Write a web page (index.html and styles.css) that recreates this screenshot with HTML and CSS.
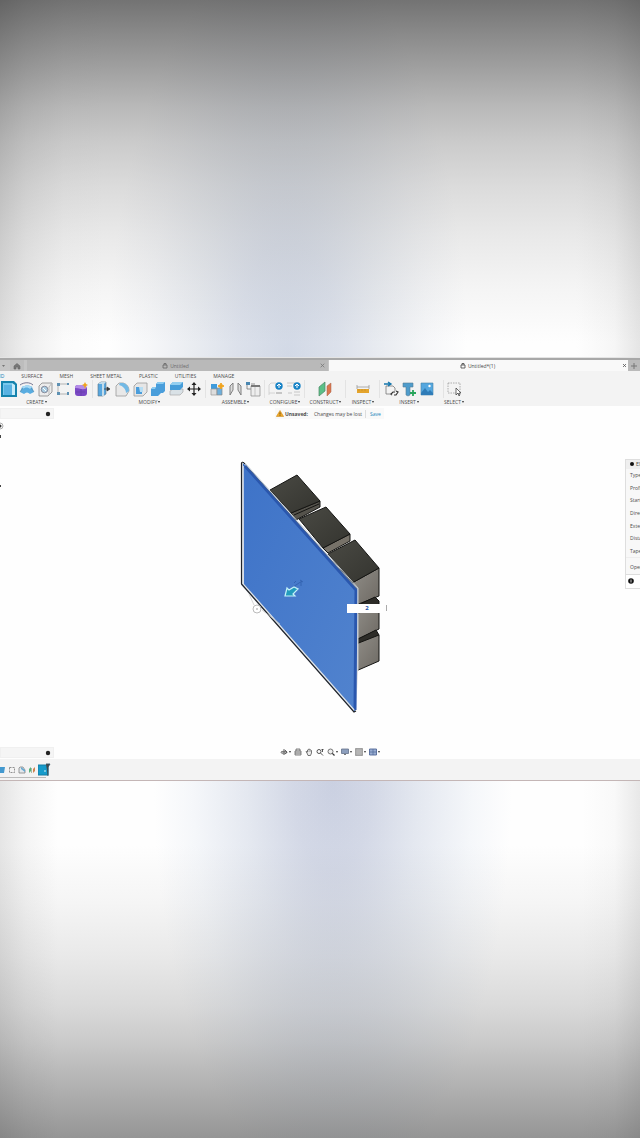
FILE: index.html
```html
<!DOCTYPE html>
<html lang="en">
<head>
<meta charset="utf-8">
<meta name="viewport" content="width=device-width, initial-scale=1">
<title>Untitled*(1)</title>
<link rel="stylesheet" href="styles.css">
</head>
<body>
<div class="backdrop backdrop-top"></div>
<main class="app">
  <nav class="tabs" aria-label="Documents">
    <div class="tab-home">
      <button aria-label="Menu"><svg width="6" height="6" viewBox="0 0 6 6"><path d="M2 2h3L3.500 4z" fill="#777"/></svg></button>
      <button class="home" aria-label="Home"><svg width="8" height="8" viewBox="0 0 8 8"><path d="M1 4L4 1.500 7 4v3H5V5H3v2H1z" fill="#777" stroke="#666" stroke-width=".6"/></svg></button>
    </div>
    <div class="tab">
      <button class="tab-name"><svg width="6" height="7" viewBox="0 0 6 7"><path d="M1 3h4v3H1zM2 3V1.5h2V3" fill="none" stroke="#666" stroke-width=".8"/></svg>Untitled</button>
      <button class="close" aria-label="Close Untitled"><svg width="5" height="5" viewBox="0 0 5 5"><path d="M.7.7l3.6 3.6M4.3.7L.7 4.3" stroke="#777" stroke-width=".8"/></svg></button>
    </div>
    <div class="tab active">
      <button class="tab-name"><svg width="6" height="7" viewBox="0 0 6 7"><path d="M1 3h4v3H1zM2 3V1.5h2V3" fill="none" stroke="#444" stroke-width=".8"/></svg>Untitled*(1)</button>
      <button class="close" aria-label="Close Untitled 1"><svg width="5" height="5" viewBox="0 0 5 5"><path d="M1 1l3 3M4 1L1 4" stroke="#555" stroke-width=".8"/></svg></button>
    </div>
    <button class="tab-new" aria-label="New document"><svg width="8" height="8" viewBox="0 0 8 8"><path d="M4 1v6M1 4h6" stroke="#777" stroke-width="1"/></svg></button>
  </nav>

  <header class="ribbon">
    <nav class="modes" aria-label="Workspaces">
      <button class="current">SOLID</button><button>SURFACE</button><button>MESH</button><button>SHEET METAL</button><button>PLASTIC</button><button>UTILITIES</button><button>MANAGE</button>
    </nav>
    <div class="groups">
      <section class="group create">
        <div class="icons">
          <button class="pressed" aria-label="Extrude"><svg viewBox="0 0 16 16"><path d="M0 0h13l3 3v13H0z" fill="#1583ad"/><path d="M2 2h9l3 2v10H2z" fill="#c7ecfa"/><path d="M2 2h9v12H2z" fill="#78c8ec"/><path d="M3 4h8v10H3z" fill="#59b2e2"/></svg></button>
          <button aria-label="Revolve"><svg viewBox="0 0 16 16"><path d="M3 6c3-2 8-2 10 0l2 5-4 2c-2-2-4-2-6 0L1 11z" fill="#58ace0"/><path d="M3 6c3-2 8-2 10 0l-2 2C9 6 6 6 4 8z" fill="#a7daf5"/><path d="M1 4c4-3 10-3 13 0" stroke="#557" fill="none" stroke-width=".8"/><path d="M1 11l3-4M15 11l-3-4" stroke="#5d8cab" fill="none" stroke-width=".7"/></svg></button>
          <button aria-label="Hole"><svg viewBox="0 0 16 16"><path d="M2 5l3-3h10v9l-4 4H2z" fill="#ececec" stroke="#888" stroke-width=".8"/><path d="M12 14V6l3-4" fill="none" stroke="#bbb"/><circle cx="7.500" cy="8.500" r="3.300" fill="#a9cce1" stroke="#778" stroke-width=".8"/><path d="M6 7l3 3" stroke="#fff"/></svg></button>
          <button aria-label="Sketch"><svg viewBox="0 0 16 16"><path d="M3 3h10M3 3v10h10M13 13v-2" fill="none" stroke="#999" stroke-width=".7"/><path d="M2 2h3v3H2zM12 2h2v2h-2zM2 11h3v3H2zM12 11h2v3h-2z" fill="#5e91b3"/></svg></button>
          <button aria-label="Create form"><svg viewBox="0 0 16 16"><path d="M2 7q0-3 3-3h5q3 0 4 3v5q0 3-3 3H5q-3 0-3-3z" fill="#7a48c4"/><path d="M2 7q0-3 3-3h5q3 0 4 3-3 2-6 1-3-1-6-1z" fill="#b48ce8"/><path d="M8 8v7M3 11h9" stroke="#6a40b0"/><path d="M12 1l1 2 2 1-2 1-1 3-1-3-2-1 2-1z" fill="#f0a31c"/></svg></button>
        </div>
        <button class="label">CREATE<i class="caret"></i></button>
      </section>
      <section class="group">
        <div class="icons">
          <button aria-label="Press pull"><svg viewBox="0 0 16 16"><path d="M2 3l3-2h5v12l-3 2H2z" fill="#58a7df" stroke="#5c7384" stroke-width=".6"/><path d="M2 3l3-2h5L8 3v12H6V3z" fill="#c4dcea"/><path d="M8 8h4M11 6l3 2-3 2z" stroke="#333" fill="#333" stroke-width=".7"/></svg></button>
          <button aria-label="Fillet"><svg viewBox="0 0 16 16"><path d="M2 5l3-3h4c4 1 6 4 6 8l-3 5H2z" fill="#e8e8e8" stroke="#999" stroke-width=".8"/><path d="M6 2h3c4 1 6 4 6 8l-3 2c0-4-3-7-7-8z" fill="#72b9e5"/></svg></button>
          <button aria-label="Shell"><svg viewBox="0 0 16 16"><path d="M2 5l3-3h10v9l-4 4H2z" fill="#e6e6e6" stroke="#999" stroke-width=".8"/><path d="M4 6h6v7H4z" fill="#4a9ddb"/><path d="M7 6h4v5H8z" fill="#b7def4"/></svg></button>
          <button aria-label="Combine"><svg viewBox="0 0 16 16"><path d="M6 3l2-2h7v9l-2 2h-2l-3 3H1V8l2-2h3z" fill="#4a9edb"/><path d="M6 3l2-2h7l-2 2zM1 8l2-2h3l-1 2z" fill="#8cccf1"/></svg></button>
          <button aria-label="Split body"><svg viewBox="0 0 16 16"><path d="M2 10l3-2h10v3l-3 3H2z" fill="#d9e1e6" stroke="#aaa" stroke-width=".7"/><path d="M2 4l3-3h10v5l-3 3H2z" fill="#469dd9"/><path d="M2 4l3-3h10l-3 3z" fill="#94cff0"/></svg></button>
          <button aria-label="Move"><svg viewBox="0 0 16 16"><path d="M8 2v12M2 8h12" stroke="#222" stroke-width="1.200"/><path d="M8 1l2.500 3h-5zM8 15l2.500-3h-5zM1 8l3-2.500v5zM15 8l-3-2.500v5z" fill="#222"/></svg></button>
        </div>
        <button class="label">MODIFY<i class="caret"></i></button>
      </section>
      <section class="group">
        <div class="icons">
          <button aria-label="New component"><svg viewBox="0 0 16 16"><path d="M2 3h6v5H2z" fill="#3f9bdc"/><path d="M2 8h6v6H2z" fill="#ddd" stroke="#999" stroke-width=".7"/><path d="M8 7h5v7H8z" fill="#6dafdc" stroke="#888" stroke-width=".7"/><path d="M12 2l1 2 2 1-2 1-1 2-1-2-2-1 2-1z" fill="#f0a31c" stroke="#f0a31c"/></svg></button>
          <button aria-label="Joint"><svg viewBox="0 0 16 16"><path d="M3 14V5l3-3v7zM14 14V5l-3-3v7z" fill="#ddd" stroke="#777" stroke-width=".9"/></svg></button>
          <button aria-label="Bill of materials"><svg viewBox="0 0 16 16"><path d="M1 1h4v3H1z" fill="#4b87b1"/><path d="M2 4v4h4M6 3h4" fill="none" stroke="#777" stroke-width=".8"/><path d="M6 5h9v10H6z" fill="#eee" stroke="#888" stroke-width=".7"/><path d="M6 4h9v2H6z" fill="#777"/><path d="M10 6v9" stroke="#aaa" stroke-width=".6"/></svg></button>
        </div>
        <button class="label">ASSEMBLE<i class="caret"></i></button>
      </section>
      <section class="group">
        <div class="icons">
          <button aria-label="Configure"><svg viewBox="0 0 16 16"><path d="M1 14V4l2-2h5M1 12h6" fill="none" stroke="#ccc" stroke-width=".8"/><circle cx="11" cy="5" r="3.700" fill="#1682c6"/><path d="M11 3v4M9 5l2-2 2 2" stroke="#fff" fill="none"/><path d="M8 12h6" stroke="#999"/></svg></button>
          <button aria-label="Configuration table"><svg viewBox="0 0 16 16"><path d="M1 2h8M1 5h5" stroke="#bbb" stroke-width=".8"/><circle cx="11" cy="5" r="3.700" fill="#1682c6"/><path d="M11 3v4M9 5l2-2 2 2" stroke="#fff" fill="none"/><path d="M2 12h4M8 11h6M8 14h6" stroke="#bbb" stroke-width=".8"/></svg></button>
        </div>
        <button class="label">CONFIGURE<i class="caret"></i></button>
      </section>
      <section class="group">
        <div class="icons"><button aria-label="Offset plane"><svg viewBox="0 0 16 16"><path d="M2 6l6-5v9l-6 5z" fill="#5cc088" stroke="#4b8766" stroke-width=".7"/><path d="M10 5l4-3v9l-4 4z" fill="#dc7750" stroke="#a56247" stroke-width=".5"/></svg></button></div>
        <button class="label">CONSTRUCT<i class="caret"></i></button>
      </section>
      <section class="group">
        <div class="icons"><button aria-label="Measure"><svg viewBox="0 0 16 16"><path d="M2 6h12M2 4v4M14 4v4" stroke="#999" stroke-width=".8"/><path d="M2 8h12v4H2z" fill="#e4a42c"/><path d="M4 8v2M7 8v2M10 8v2" stroke="#b98523" stroke-width=".5"/></svg></button></div>
        <button class="label">INSPECT<i class="caret"></i></button>
      </section>
      <section class="group insert">
        <div class="icons">
          <button aria-label="Insert derive"><svg viewBox="0 0 16 16"><path d="M3 5h7l2 2v3M3 5v8h5" fill="none" stroke="#777" stroke-width=".8"/><path d="M1 3h6M5 1l3 2-3 2" fill="none" stroke="#1677ad" stroke-width="1.400"/><path d="M9 14l-1-1 2-2h2M11 14h2l2-3-2-1" fill="none" stroke="#333" stroke-width="1.200"/></svg></button>
          <button aria-label="Insert fastener"><svg viewBox="0 0 16 16"><path d="M2 2h10v4H9v8l-2 1-2-1V6H2z" fill="#4e9ccc" stroke="#557d95" stroke-width=".6"/><path d="M12 9v6M9 12h6" stroke="#28a55b" stroke-width="1.800"/></svg></button>
          <button aria-label="Canvas"><svg viewBox="0 0 16 16"><path d="M2 2h12v12H2z" fill="#55a7df" stroke="#4783a8" stroke-width=".6"/><path d="M2 12l4-5 3 4 2-2 3 3v2H2z" fill="#2f7cb8"/><circle cx="10.500" cy="5" r="1.200" fill="#fff"/></svg></button>
        </div>
        <button class="label">INSERT<i class="caret"></i></button>
      </section>
      <section class="group">
        <div class="icons"><button aria-label="Select"><svg viewBox="0 0 16 16"><path d="M2 2h12v10H2z" fill="none" stroke="#999" stroke-width=".8" stroke-dasharray="1.500 1"/><path d="M10 7v7l2-2 1 3 1-1-1-2h2z" fill="#fff" stroke="#444" stroke-width=".8"/></svg></button></div>
        <button class="label">SELECT<i class="caret"></i></button>
      </section>
    </div>
  </header>

  <section class="viewport">
    <svg class="model" viewBox="0 406 640 353" role="img" aria-label="Extruded panel with blocks">
      <defs>
        <linearGradient id="face" x1="0" y1="0" x2="1" y2="1"><stop offset="0" stop-color="#3e73c8"/><stop offset="1" stop-color="#5183ce"/></linearGradient>
        <linearGradient id="top" x1="0" y1="0" x2="1" y2="1"><stop offset="0" stop-color="#4a4a44"/><stop offset="1" stop-color="#34342f"/></linearGradient>
        <linearGradient id="side" x1="0" y1="0" x2="1" y2="1"><stop offset="0" stop-color="#918e88"/><stop offset="1" stop-color="#6d6963"/></linearGradient>
      </defs>
      <g stroke="#151513" stroke-width="1" stroke-linejoin="round">
        <path d="M291 513l29-12v6l-24 13z" fill="#55534c"/>
        <path d="M294 515l25-11" fill="none"/>
        <path d="M270 490l27-15 23 26-29 12z" fill="url(#top)"/>
        <path d="M323 548l27-14v7l-22 12z" fill="#777269"/>
        <path d="M299 519l27-12 24 27-27 14z" fill="url(#top)"/>
        <path d="M352 583l27-15v28l-23 9z" fill="url(#side)"/>
        <path d="M328 554l27-14 24 28-27 15z" fill="url(#top)"/>
        <path d="M356 606l19-9 4 4v4l-23 9z" fill="#2d2c28"/>
        <path d="M356 614l23-9v24l-23 11z" fill="url(#side)"/>
        <path d="M356 640l20-10 3 5-23 10z" fill="#2d2c28"/>
        <path d="M356 644l23-9v26l-23 10z" fill="url(#side)"/>
      </g>
      <path d="M241 463l2-1 115 127v82l-2 41h-2L241 585z" fill="#d7dadf"/>
      <path d="M243 463l113 127-1 122-111-127z" fill="url(#face)"/>
      <path d="M245 466l111 124-1 120" fill="none" stroke="#2a57ae" stroke-width="3"/>
      <path d="M243 462l114 127" fill="none" stroke="#4f6789" stroke-width=".8"/>
      <path d="M244 462l114 126v83" fill="none" stroke="#c5ced6" stroke-width="1"/>
      <path d="M243 466v118l111 126" fill="none" stroke="#dfe4e9" stroke-width="1.500"/>
      <path d="M241.500 463v121L354 712l2-1" fill="none" stroke="#20242b" stroke-width="1.200"/>
      <path d="M241 463l2-1 2 2" fill="none" stroke="#222"/>
      <path d="M293 587l9-6M294 583l2-2M300 580l3 2M301 586v-4" stroke="#2c5aa8" stroke-width=".7"/>
      <path d="M285 596l2-8 2 2 5-3 4 2-5 5 2 2z" fill="#239cbd" stroke="#c5f2f8" stroke-width="1.200"/>
      <path d="M249 594l5 11M262 610l18 14" stroke="#ccc" stroke-width=".8"/>
      <circle cx="257" cy="609" r="4" fill="#fff" stroke="#aaa" stroke-width=".8"/><path d="M256 609h2" stroke="#888" stroke-width=".8"/>
    </svg>

    <aside class="browser" aria-label="Browser"><button aria-label="Browser options"><svg width="6" height="6" viewBox="0 0 6 6"><circle cx="3" cy="3" r="2.200" fill="#222"/></svg></button></aside>
    <div class="tree">
      <svg width="4" height="66" viewBox="0 0 4 66"><circle cx="0" cy="4" r="3" fill="none" stroke="#999" stroke-width=".8"/><circle cx="0" cy="4" r="1.500" fill="#333"/><path d="M0 13h1v3H0zM0 63h1v2H0z" fill="#444"/></svg>
    </div>

    <div class="notice" role="status">
      <svg width="8" height="7" viewBox="0 0 8 7"><path d="M4 .5L7.700 6.500H.3z" fill="#efa829" stroke="#c98512" stroke-width=".5"/><path d="M4 2.500v2M4 5v.8" stroke="#543b0d" stroke-width=".8"/></svg>
      <strong>Unsaved:</strong><span>Changes may be lost</span><a href="#save">Save</a>
    </div>

    <aside class="dialog" aria-label="Extrude">
      <h2><svg width="4" height="4" viewBox="0 0 4 4"><circle cx="2" cy="2" r="2" fill="#111"/></svg>EXTRUDE</h2>
      <ul><li>Type</li><li>Profiles</li><li>Start</li><li>Direction</li><li>Extent</li><li>Distance</li><li>Taper</li></ul>
      <p>Operation</p>
      <footer><svg width="6" height="6" viewBox="0 0 6 6"><circle cx="3" cy="3" r="2.800" fill="#111"/><path d="M3 1.500v3" stroke="#fff" stroke-width=".8"/></svg></footer>
    </aside>

    <div class="distance"><input type="text" value="2" aria-label="Distance"><button aria-label="Distance options"><svg width="3" height="6" viewBox="0 0 3 6"><path d="M1.500 0v6" stroke="#aaa"/></svg></button></div>

    <aside class="browser comments" aria-label="Comments"><button aria-label="Comment options"><svg width="6" height="6" viewBox="0 0 6 6"><circle cx="3" cy="3" r="2.200" fill="#222"/></svg></button></aside>

    <div class="navbar" role="toolbar" aria-label="Navigation">
      <button aria-label="Orbit"><svg viewBox="0 0 8 8"><path d="M4 1v6M1 4h6M5 2l2 2-2 2" stroke="#555" fill="none" stroke-width=".9"/><ellipse cx="4" cy="4.500" rx="3" ry="1.300" fill="none" stroke="#666" stroke-width=".7"/></svg><i class="caret"></i></button>
      <button aria-label="Look at"><svg viewBox="0 0 8 8"><path d="M1 3h6v4H1zM2 3V1h4v2M1 5h6" fill="#ddd" stroke="#666" stroke-width=".8"/></svg></button>
      <button aria-label="Pan"><svg viewBox="0 0 8 8"><path d="M2 5L1 3.500l1.500.5V2L4 1l1 .5 1.500 1V5L5.500 7.500H3z" fill="#eee" stroke="#555" stroke-width=".8"/><path d="M4 4V1M5.200 4V2" stroke="#777" stroke-width=".5"/></svg></button>
      <button aria-label="Zoom"><svg viewBox="0 0 8 8"><circle cx="3" cy="3.500" r="2" fill="none" stroke="#555"/><path d="M4.500 5L7 7.500M6.500 4V1M5.500 2l1-1 1 1" fill="none" stroke="#444" stroke-width=".9"/></svg></button>
      <button aria-label="Zoom window"><svg viewBox="0 0 8 8"><circle cx="3.500" cy="3.500" r="2.500" fill="#eee" stroke="#666" stroke-width=".9"/><path d="M5.300 5.300L7.500 7.500" stroke="#333" stroke-width="1.200"/></svg><i class="caret"></i></button>
      <button aria-label="Display settings"><svg viewBox="0 0 8 8"><path d="M.5 1h7v4.500h-7z" fill="#8d9fbd" stroke="#65728b" stroke-width=".8"/><path d="M3 6h2v1H3z" fill="#777"/></svg><i class="caret"></i></button>
      <button aria-label="Grid settings"><svg viewBox="0 0 8 8"><path d="M.5.500h7v7h-7z" fill="#aaa" stroke="#888" stroke-width=".7"/><path d="M.5 3h7M.5 5h7M3 .5v7M5 .5v7" stroke="#ccc" stroke-width=".4"/></svg><i class="caret"></i></button>
      <button aria-label="Viewports"><svg viewBox="0 0 8 8"><path d="M.5 1h7v6h-7z" fill="#99add1" stroke="#526a99" stroke-width=".9"/><path d="M4 1v6M.5 4h7" stroke="#526a99" stroke-width=".7"/></svg><i class="caret"></i></button>
    </div>
  </section>

  <footer class="timeline" aria-label="Timeline">
    <div class="track">
      <button aria-label="Extrude feature"><svg viewBox="0 0 8 8"><path d="M0 2l2-1h5L6 7H0z" fill="#4399cf"/></svg></button>
      <button aria-label="Sketch feature"><svg viewBox="0 0 8 8"><path d="M1.500 1.500h5v5h-5z" fill="none" stroke="#777" stroke-width=".8" stroke-dasharray="2 1"/></svg></button>
      <button aria-label="Fillet feature"><svg viewBox="0 0 8 8"><path d="M1 2l1-1h3l2 3v3H1z" fill="#e3e8ec" stroke="#777" stroke-width=".7"/><path d="M3 1l4 3v2L3 3z" fill="#65a9d3"/></svg></button>
      <button aria-label="Plane feature"><svg viewBox="0 0 8 8"><path d="M1 3l2-2v4L1 7z" fill="#58b27c"/><path d="M5 3l2-2v4L5 7z" fill="#ce8250"/><path d="M3.500 2v5" stroke="#8aa083" stroke-width=".7"/></svg></button>
      <button class="now" aria-label="Current extrude"><svg viewBox="0 0 14 14"><path d="M0 2h10v10H0z" fill="#159bcb" stroke="#147da4"/><path d="M6 8h2" stroke="#d6f2fb"/><path d="M8 1h4l-2 3v9" fill="#444" stroke="#345568" stroke-width=".9"/></svg></button>
    </div>
  </footer>
</main>
<div class="backdrop backdrop-bottom"></div>
</body>
</html>
```
FILE: styles.css
```css
* { box-sizing: border-box; }
body {
  margin: 0;
  min-height: 100vh;
  display: grid;
  grid-template-rows: 1fr auto 1fr;
  grid-template-columns: minmax(0, 1fr);
  font: 5px/8px "Open Sans", "Noto Sans", sans-serif;
  color: #4c4c4c;
  background: #fff;
  overflow-x: hidden;
}
button {
  border: 0;
  padding: 0;
  margin: 0;
  background: none;
  font: inherit;
  color: inherit;
  display: flex;
  align-items: center;
  justify-content: center;
}
svg { display: block; flex: none; }

.backdrop { background-blend-mode: multiply; }
.backdrop-top {
  background-image:
    linear-gradient(to bottom, #737373 0%, #8b8b8b 10%, #a2a2a2 20%, #b9b9b9 30%, #cbcbcb 40%, #dbdbdb 52%, #e9e9e9 66%, #f4f4f4 80%, #fefefe 96%),
    linear-gradient(to right, #dedede 0%, #efefef 4%, #fcfcfc 10%, #fff 16%, #fff 90%, #f7f7f7 96%, #e6e6e6 100%),
    radial-gradient(28% 115% at 45% 100%, #d3dae7 0%, #dde2ec 28%, #eaedf2 52%, #f7f8fa 78%, #fff 100%);
}
.backdrop-bottom {
  background-image:
    linear-gradient(to top, #959595 0%, #a5a5a5 8%, #b8b8b8 18%, #cacaca 27%, #dadada 37%, #e9e9e9 51%, #f5f5f5 66%, #fefefe 82%),
    linear-gradient(to right, #e6e6e6 0%, #f5f5f5 4%, #fff 9%, #fff 91%, #fafafa 96%, #e9e9e9 100%),
    radial-gradient(28% 115% at 52% 0%, #cbd1e2 0%, #d4d9e7 22%, #e5e9f1 48%, #f6f8fb 78%, #fff 100%);
}

.app { background: #fefefe; border-top: 1px solid #e4e4e4; border-bottom: 1px solid #c4b6b6; }

.tabs { display: flex; height: 13px; border-top: 2px solid #a8a8a8; background: #b9b9b9; }
.tab-home { width: 26px; display: flex; background: #c5c5c5; gap: 4px; }
.home { width: 14px; background: #bdbdbd; }
.tab { flex: 1; display: flex; align-items: center; padding: 0 3px 0 4px; border-left: 1px solid #c5c5c5; color: #6a6a6a; }
.tab.active { background: #f9f9f9; color: #444; padding-right: 1px; }
.tab-name { flex: 1; gap: 2px; }
.tab-new { width: 12px; background: #bababa; }

.ribbon { background: #f3f3f3; height: 35px; display: flex; flex-direction: column; }
.modes { display: flex; gap: 17px; padding-top: 1px; height: 9px; }
.modes button { white-space: nowrap; }
.modes .current { margin-left: -10px; color: #1683b5; }
.groups { display: grid; grid-template-columns: 93px 113px 59px 40px 41px 34px 64px 20px; }
.group { display: flex; flex-direction: column; align-items: center; }
.icons { display: flex; gap: 2px; justify-content: center; align-self: stretch; border-right: 1px solid #e3e3e3; height: 18px; align-items: center; }
.group:last-child .icons { border-right: 0; }
.icons button { width: 16px; height: 18px; }
.icons svg { width: 16px; height: 16px; }
.create .icons { padding-right: 2px; }
.create .label { padding-right: 20px; }
.insert .icons { padding-right: 5px; }
.insert .label { padding-right: 6px; }
.label { height: 7px; white-space: nowrap; gap: 1px; }
.caret { width: 0; height: 0; border: 1px solid transparent; border-top: 2px solid #333; border-bottom: 0; }

.viewport { position: relative; overflow: hidden; }
.model { width: 100%; height: auto; }

.browser {
  position: absolute;
  top: 2px;
  left: 0;
  width: 54px;
  height: 11px;
  padding-right: 2px;
  background: #f5f5f5;
  border: 1px solid #f0f0f0;
  display: flex;
  justify-content: flex-end;
}
.comments { top: auto; bottom: 1px; }
.tree { position: absolute; top: 16px; left: 0; }

.notice {
  position: absolute;
  top: 2px;
  left: 50%;
  margin-left: -45px;
  height: 11px;
  display: flex;
  align-items: center;
  background: #f9f9f9;
  padding: 0 3px 0 1px;
}
.notice strong { margin: 0 6px 0 1px; }
.notice span { padding-right: 3px; border-right: 1px solid #ddd; }
.notice a { padding-left: 4px; color: #1785bb; text-decoration: none; }

.dialog {
  position: absolute;
  top: 15%;
  right: 0;
  width: 15px;
  overflow: hidden;
  background: #f8f8f8;
  border: 1px solid #dedede;
  border-right: 0;
  white-space: nowrap;
}
.dialog h2 { margin: 0; height: 9px; padding-left: 4px; display: flex; align-items: center; gap: 2px; font: inherit; background: #efefef; }
.dialog ul { margin: 0; padding: 0 0 0 4px; list-style: none; height: 88px; display: grid; grid-auto-rows: 1fr; align-items: center; }
.dialog p { margin: 0; padding: 5px 0 3px 4px; border-top: 1px solid #eee; }
.dialog footer { height: 14px; display: flex; align-items: center; padding-left: 2px; border-top: 1px solid #ddd; background: #fff; }

.distance { position: absolute; left: 50%; top: 56%; margin-left: 27px; display: flex; align-items: center; gap: 2px; }
.distance input { width: 36px; height: 9px; border: 0; padding: 0 0 0 4px; text-align: center; font: 700 6px/9px "Open Sans", sans-serif; color: #1d4fa8; background: #fff; }

.navbar { position: absolute; left: 0; right: 0; bottom: 2px; height: 10px; padding-left: 20px; display: flex; justify-content: center; gap: 3px; }
.navbar button { gap: 1px; }
.navbar svg { width: 8px; height: 8px; }

.timeline { height: 21px; background: #f3f3f3; padding-top: 3px; }
.track { display: flex; align-items: center; gap: 2px; width: 48px; height: 16px; margin-left: -2px; border-bottom: 1px solid #bbb; }
.track svg { width: 8px; height: 8px; }
.track .now svg { width: 14px; height: 14px; }
```
